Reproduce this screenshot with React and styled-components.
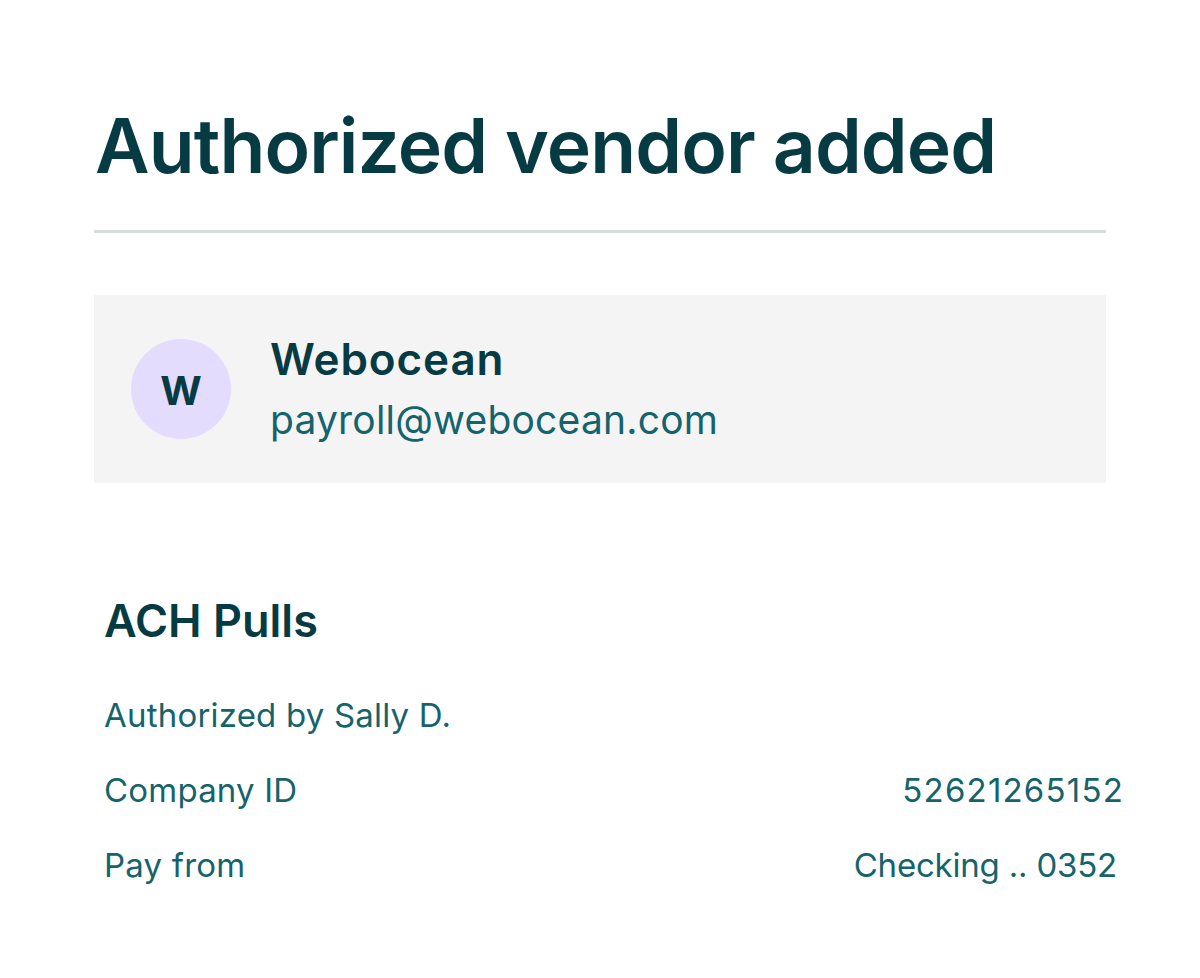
import React from 'react';
import styled, { createGlobalStyle } from 'styled-components';

const GlobalStyle = createGlobalStyle`
  html, body {
    margin: 0;
    padding: 0;
    background: #ffffff;
  }
  body {
    font-family: Inter, "Liberation Sans", Arial, sans-serif;
    -webkit-font-smoothing: antialiased;
  }
`;

const Page = styled.div`
  width: 1200px;
  height: 978px;
  box-sizing: border-box;
  padding: 0 94px;
  display: flex;
  flex-direction: column;
`;

const Title = styled.h1`
  margin: 98px 0 0 1px;
  font-size: 75px;
  line-height: 96px;
  font-weight: 600;
  letter-spacing: -0.9px;
  color: #073b43;
`;

const Divider = styled.hr`
  margin: 36px 0 0;
  border: none;
  height: 3px;
  background: #d9dcdc;
`;

const VendorCard = styled.div`
  margin-top: 62px;
  height: 188px;
  background: #f4f4f4;
  display: flex;
  align-items: center;
  gap: 39px;
  padding-left: 37px;
`;

const Avatar = styled.div`
  width: 100px;
  height: 100px;
  border-radius: 50%;
  background: #e3dcfd;
  color: #073b43;
  display: flex;
  align-items: center;
  justify-content: center;
  font-size: 40px;
  font-weight: 700;
  padding-top: 2px;
  box-sizing: border-box;
`;

const VendorInfo = styled.div`
  display: flex;
  flex-direction: column;
  gap: 11px;
  margin-top: -2px;
`;

const VendorName = styled.div`
  font-size: 44px;
  line-height: 52px;
  font-weight: 600;
  letter-spacing: 0.9px;
  color: #073b43;
`;

const VendorEmail = styled.div`
  font-size: 39px;
  line-height: 48px;
  font-weight: 400;
  color: #15636b;
  letter-spacing: 0.2px;
`;

const Section = styled.section`
  margin: 110px -18px 0 10px;
  display: flex;
  flex-direction: column;
`;

const SectionTitle = styled.h2`
  margin: 0 0 46px;
  font-size: 45px;
  line-height: 56px;
  font-weight: 600;
  color: #073b43;
`;

const Row = styled.div`
  display: flex;
  justify-content: space-between;
  align-items: baseline;
  height: 75px;
  font-size: 33px;
  line-height: 40px;
  color: #15636b;
  letter-spacing: 0.2px;
`;

const Value = styled.span`
  padding-right: ${({ inset }) => inset || 0}px;
  letter-spacing: ${({ spread }) => spread ?? 0.2}px;
`;

const rows = [
  { label: 'Authorized by Sally D.' },
  { label: 'Company ID', value: '52621265152', spread: 1.2 },
  { label: 'Pay from', value: 'Checking .. 0352', inset: 7, spread: -0.2 },
];

export default function App() {
  return (
    <>
      <GlobalStyle />
      <Page>
        <Title>Authorized vendor added</Title>
        <Divider />
        <VendorCard>
          <Avatar>W</Avatar>
          <VendorInfo>
            <VendorName>Webocean</VendorName>
            <VendorEmail>payroll@webocean.com</VendorEmail>
          </VendorInfo>
        </VendorCard>
        <Section>
          <SectionTitle>ACH Pulls</SectionTitle>
          {rows.map((r) => (
            <Row key={r.label}>
              <span>{r.label}</span>
              {r.value && (
                <Value inset={r.inset} spread={r.spread}>
                  {r.value}
                </Value>
              )}
            </Row>
          ))}
        </Section>
      </Page>
    </>
  );
}
